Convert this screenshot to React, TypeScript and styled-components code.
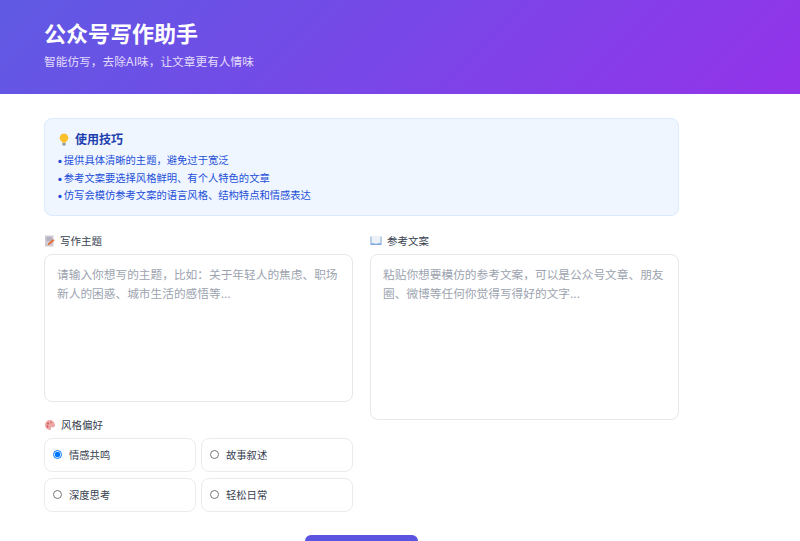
import React from 'react';
import styled, { createGlobalStyle } from 'styled-components';

const tips = [
  '提供具体清晰的主题，避免过于宽泛',
  '参考文案要选择风格鲜明、有个人特色的文章',
  '仿写会模仿参考文案的语言风格、结构特点和情感表达',
];

const styles = ['情感共鸣', '故事叙述', '深度思考', '轻松日常'];

const BulbIcon = () => (
  <svg width="14" height="14" viewBox="0 0 14 14">
    <path d="M7 0.5a4.3 4.3 0 0 0-2.6 7.7c.6.5.8 1 .8 1.6h3.6c0-.6.2-1.1.8-1.6A4.3 4.3 0 0 0 7 .5z" fill="#fbc02d" />
    <rect x="5.3" y="10" width="3.4" height="2.6" rx="0.8" fill="#8d99ae" />
  </svg>
);

const MemoIcon = () => (
  <svg width="11" height="12" viewBox="0 0 11 12">
    <rect x="1" y="0.5" width="8.5" height="11" fill="#cfcbd6" />
    <path d="M2.5 3h5.5M2.5 5h5.5" stroke="#8f8a9c" strokeWidth="0.8" />
    <path d="M3.5 10.5l1-2.5 4.5-4 1.5 1.5-4.5 4z" fill="#e2703a" />
  </svg>
);

const BookIcon = () => (
  <svg width="12" height="11" viewBox="0 0 12 11">
    <path d="M0.5 1.5v8.5h11V1.5z" fill="#7fa8d8" />
    <path d="M1.5 1c1.800-.5 3.300-.3 4.500.6V9C4.800 8.200 3.300 8 1.500 8.500zM10.500 1C8.700.5 7.200.7 6 1.600V9c1.200-.8 2.700-1 4.500-.5z" fill="#eef1f6" />
  </svg>
);

const PaletteIcon = () => (
  <svg width="12" height="12" viewBox="0 0 12 12">
    <path d="M6 1a5 5 0 1 0 0 10c1 0 1.200-.7.900-1.300-.4-.8.100-1.500 1-1.500H9.500A1.700 1.700 0 0 0 11 6.500C11 3.500 8.800 1 6 1z" fill="#eda6a6" />
    <circle cx="4" cy="4.500" r="0.900" fill="#c9544f" />
    <circle cx="7" cy="3.500" r="0.900" fill="#d77a70" />
    <circle cx="3.500" cy="7.500" r="0.900" fill="#c9544f" />
  </svg>
);

export default function App() {
  return (
    <>
      <GlobalStyle />
      <Header>
        <Title>公众号写作助手</Title>
        <Subtitle>智能仿写，去除AI味，让文章更有人情味</Subtitle>
      </Header>
      <Main>
        <TipsBox>
          <TipsTitle>
            <BulbIcon />
            使用技巧
          </TipsTitle>
          <TipsList>
            {tips.map((tip) => (
              <Tip key={tip}>{tip}</Tip>
            ))}
          </TipsList>
        </TipsBox>
        <Columns>
          <Column>
            <Label>
              <MemoIcon />
              写作主题
            </Label>
            <TextArea $height={148} placeholder="请输入你想写的主题，比如：关于年轻人的焦虑、职场新人的困惑、城市生活的感悟等..." />
            <StyleLabel>
              <PaletteIcon />
              风格偏好
            </StyleLabel>
            <RadioGrid>
              {styles.map((name, i) => (
                <RadioCard key={name}>
                  <input type="radio" name="style" defaultChecked={i === 0} />
                  {name}
                </RadioCard>
              ))}
            </RadioGrid>
          </Column>
          <Column>
            <Label>
              <BookIcon />
              参考文案
            </Label>
            <TextArea $height={166} placeholder="粘贴你想要模仿的参考文案，可以是公众号文章、朋友圈、微博等任何你觉得写得好的文字..." />
          </Column>
        </Columns>
        <Actions>
          <SubmitButton />
        </Actions>
      </Main>
    </>
  );
}

const GlobalStyle = createGlobalStyle`
  html, body {
    margin: 0;
    height: 541px;
    overflow: hidden;
    background: #fff;
    font-family: 'Inter', 'Noto Sans CJK SC', sans-serif;
    color: #1f2937;
  }
  * {
    box-sizing: border-box;
  }
`;

const Header = styled.header`
  height: 94px;
  padding: 20px 44px 0;
  background: linear-gradient(135deg, #5f5ae4 0%, #9333ea 100%);
  color: #fff;
`;
const Title = styled.h1`
  margin: 0;
  font-size: 22px;
  line-height: 29px;
  font-weight: 700;
`;
const Subtitle = styled.p`
  margin: 5px 0 0;
  font-size: 11.700px;
  line-height: 16px;
  color: #e3dcfb;
`;
const Main = styled.main`
  width: 723px;
  padding: 24px 44px 0;
`;
const TipsBox = styled.section`
  height: 98px;
  padding: 13px 12px 0;
  background: #eff6ff;
  border: 1px solid #dbeafe;
  border-radius: 8px;
`;
const TipsTitle = styled.h3`
  display: flex;
  align-items: center;
  gap: 4px;
  margin: 0 0 4px;
  font-size: 12px;
  line-height: 16px;
  font-weight: 700;
  color: #1e40af;
`;
const TipsList = styled.ul`
  margin: 0;
  padding: 0;
  list-style: none;
`;
const Tip = styled.li`
  font-size: 10.300px;
  line-height: 17.500px;
  color: #1d4ed8;
  &::before {
    content: '•';
    margin-right: 1px;
  }
`;
const Columns = styled.div`
  display: grid;
  grid-template-columns: 309px 309px;
  gap: 17px;
  align-items: start;
  margin-top: 17px;
`;
const Column = styled.div`
  display: flex;
  flex-direction: column;
`;
const Label = styled.label`
  display: flex;
  align-items: center;
  gap: 5px;
  height: 16px;
  margin-bottom: 5px;
  padding-bottom: 1px;
  font-size: 10.500px;
  color: #374151;
`;
const StyleLabel = styled(Label)`
  margin-top: 15px;
`;
const TextArea = styled.textarea<{ $height: number }>`
  display: block;
  width: 100%;
  height: ${(p) => p.$height}px;
  padding: 11px 12px;
  border: 1px solid #e5e7eb;
  border-radius: 8px;
  outline: none;
  resize: none;
  font-family: inherit;
  font-size: 11.700px;
  line-height: 19px;
  &::placeholder {
    color: #9ca3af;
  }
`;
const RadioGrid = styled.div`
  display: grid;
  grid-template-columns: 152px 152px;
  gap: 6px 5px;
`;
const RadioCard = styled.label`
  display: flex;
  align-items: center;
  gap: 7px;
  height: 34px;
  padding: 0 8px 1px;
  border: 1px solid #e9ebef;
  border-radius: 8px;
  font-size: 10.300px;
  color: #374151;
  input {
    width: 9px;
    height: 9px;
    margin: 0;
  }
`;
const Actions = styled.div`
  display: flex;
  justify-content: center;
  margin-top: 23px;
`;
const SubmitButton = styled.button`
  width: 113px;
  height: 40px;
  border: 0;
  border-radius: 6px;
  background: #5b54e0;
`;
